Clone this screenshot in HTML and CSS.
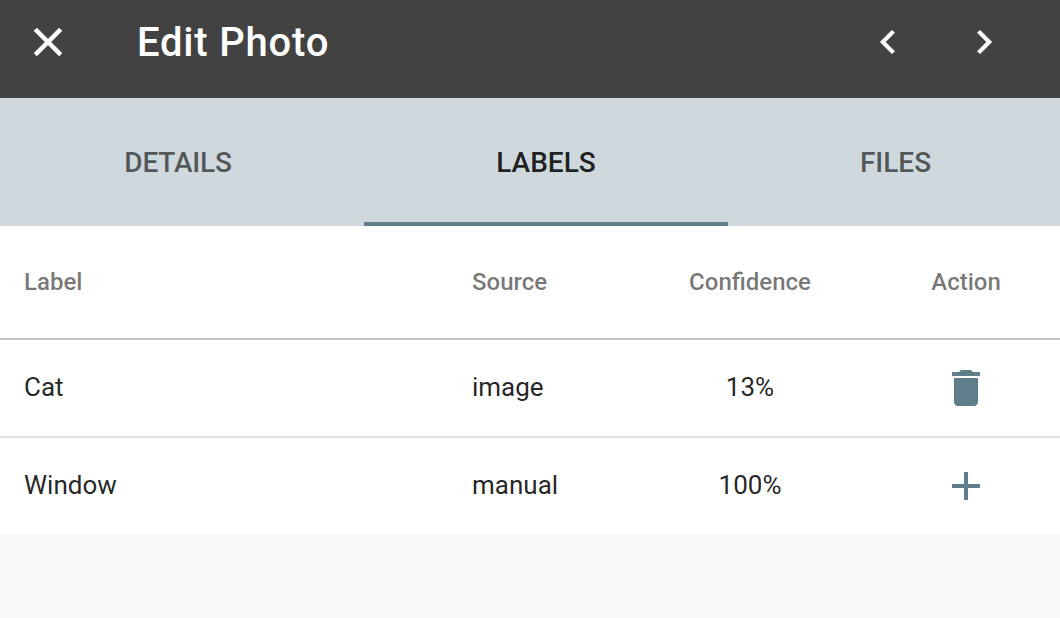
FILE: index.html
```html
<!DOCTYPE html>
<html lang="en">
<head>
<meta charset="utf-8">
<title>Edit Photo</title>
<link rel="stylesheet" href="styles.css">
</head>
<body>
<header class="toolbar">
  <svg class="icon rounded" viewBox="0 0 24 24"><path d="M18.9 6.41 17.59 5.1 12 10.69 6.41 5.1 5.1 6.41 10.69 12 5.1 17.59 6.41 18.9 12 13.31 17.59 18.9 18.9 17.59 13.31 12z"/></svg>
  <h1 class="title">Edit Photo</h1>
  <nav class="pager">
    <svg class="icon rounded" viewBox="0 0 24 24"><path d="M15.2 7.41 14 6.2 8.2 12 14 17.8 15.2 16.59 10.63 12z"/></svg>
    <svg class="icon rounded" viewBox="0 0 24 24"><path d="M8.8 16.59 10 17.8 15.8 12 10 6.2 8.8 7.41 13.37 12z"/></svg>
  </nav>
</header>
<nav class="tabs">
  <a class="tab details"><span>DETAILS</span></a>
  <a class="tab active"><span>LABELS</span></a>
  <a class="tab files"><span>FILES</span></a>
</nav>
<main class="table">
  <div class="row head"><span>Label</span><span>Source</span><span class="center">Confidence</span><span class="center">Action</span></div>
  <div class="row"><span class="text">Cat</span><span class="text">image</span><span class="text center">13%</span><span class="action"><svg class="icon" viewBox="0 0 24 24"><path d="M6 19c0 1.1.9 2 2 2h8c1.1 0 2-.9 2-2V7H6v12zM19 4h-3.5l-1-1h-5l-1 1H5v2h14V4z"/></svg></span></div>
  <div class="row"><span class="text">Window</span><span class="text">manual</span><span class="text center">100%</span><span class="action"><svg class="icon" viewBox="0 0 24 24"><path d="M19 13h-6v6h-2v-6H5v-2h6V5h2v6h6z"/></svg></span></div>
</main>
</body>
</html>
```
FILE: styles.css
```css
* { box-sizing: border-box; }
body { margin: 0; height: 618px; overflow: hidden; background: #fafafa; font-family: Roboto, sans-serif; color: rgba(0,0,0,.87); }
.icon { display: block; width: 48px; height: 48px; flex: none; fill: currentColor; }
.rounded { stroke: currentColor; stroke-width: .5; stroke-linejoin: round; }
.toolbar { display: flex; align-items: center; height: 98px; padding: 0 52px 14px 24px; background: #424242; color: #fff; }
.title { flex: 1; margin: 0; padding: 2px 0 0 65px; font-size: 40px; font-weight: 500; line-height: 48px; letter-spacing: .8px; }
.pager { display: flex; gap: 48px; }
.tabs { display: grid; grid-template-columns: 364px 364px 332px; height: 128px; background: #cfd8dc; }
.tab { display: flex; align-items: center; justify-content: center; font-size: 28px; font-weight: 500; color: rgba(0,0,0,.61); border-bottom: 4px solid transparent; padding-top: 4px; }
.details { padding-right: 8px; letter-spacing: -.2px; }
.files { padding-left: 3px; }
.active { color: rgba(0,0,0,.87); border-color: #607d8b; }
.table { background: #fff; }
.row { display: grid; grid-template-columns: 448px 152px 252px 180px; align-items: center; height: 98px; padding-left: 24px; font-size: 26px; border-bottom: 2px solid #e0e0e0; }
.head { height: 114px; font-size: 24px; font-weight: 500; color: rgba(0,0,0,.54); border-color: #c4c4c4; }
.row:last-child { height: 96px; border-bottom: 0; }
.text { padding-bottom: 2px; }
.center { text-align: center; }
.action { display: flex; justify-content: center; color: #607d8b; }
```
